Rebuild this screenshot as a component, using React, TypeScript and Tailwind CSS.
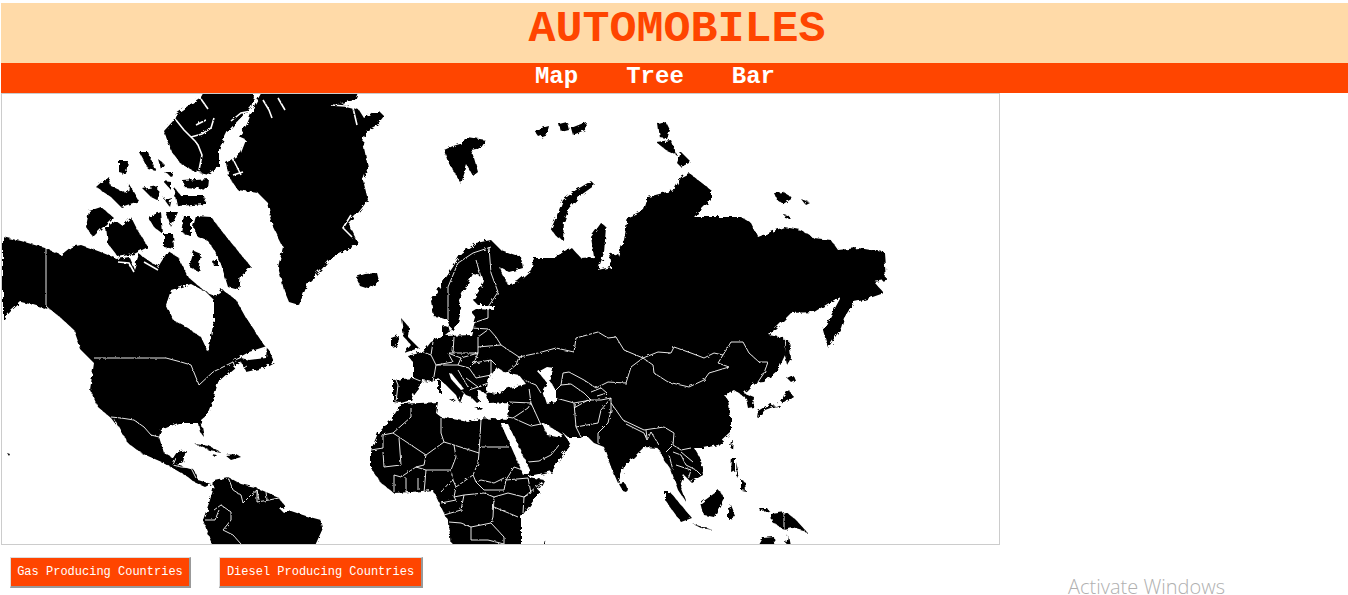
const land = [
  // greenland
  'M254,104 L262,90 L358,90 L354,100 L340,103 L352,108 L358,110 L363,118 L372,112 L379,112 L383,116 L376,125 L365,131 L362,143 L367,167 L362,180 L367,200 L357,213 L347,223 L357,243 L347,250 L330,258 L320,270 L307,283 L298,305 L288,302 L283,290 L277,267 L282,247 L272,227 L267,203 L257,193 L237,190 L228,177 L225,163 L240,153 L245,140 L238,137 L246,124 Z',
  // ellesmere
  'M175,114 L200,97 L204,90 L250,90 L253,97 L250,107 L227,131 L218,149 L218,166 L207,174 L193,171 L180,164 L170,151 L163,131 L172,121 Z',
  // arctic islands
  'M138,152 L147,152 L155,171 L147,169 Z',
  'M157,159 L163,164 L160,169 Z',
  'M118,161 L127,161 L125,174 L118,172 Z',
  'M95,187 L107,176 L110,186 L127,194 L128,184 L138,201 L120,207 L110,197 Z',
  'M142,189 L157,186 L158,201 L150,197 Z',
  'M162,181 L170,182 L170,190 Z',
  'M163,199 L170,197 L168,206 Z',
  'M173,187 L180,196 L203,196 L205,204 L177,206 Z',
  'M182,181 L208,179 L207,189 L183,187 Z',
  'M163,172 L172,172 L170,176 Z',
  'M88,211 L100,207 L112,217 L103,226 L92,237 L85,227 Z',
  'M105,227 L115,221 L122,226 L130,217 L137,231 L147,247 L133,254 L117,257 L107,244 Z',
  'M147,217 L160,212 L162,234 L153,227 Z',
  'M165,212 L177,212 L170,227 Z',
  'M163,234 L172,234 L173,249 L163,247 Z',
  'M183,216 L190,216 L190,237 L180,232 Z',
  'M195,216 L210,217 L223,234 L237,251 L250,267 L240,276 L238,290 L227,287 L220,264 L213,250 L207,241 L197,237 L192,227 Z',
  'M193,251 L200,254 L197,271 L188,267 Z',
  'M212,262 L217,260 L217,266 L213,266 Z',
  // north america
  'M2,237 L20,241 L44,248 L60,255 L70,247 L80,245 L97,251 L117,259 L128,257 L133,269 L138,254 L157,267 L167,251 L177,257 L187,277 L200,288 L212,296 L222,290 L235,300 L245,318 L253,330 L263,345 L268,350 L273,362 L262,368 L245,372 L240,362 L228,372 L217,382 L213,397 L206,415 L200,420 L203,437 L199,432 L197,423 L177,423 L160,430 L158,437 L163,453 L172,458 L176,452 L185,450 L182,462 L176,465 L193,470 L197,480 L210,484 L204,487 L193,482 L187,477 L163,463 L140,453 L127,443 L116,426 L110,418 L97,407 L89,390 L93,363 L80,350 L73,330 L60,318 L50,310 L33,305 L20,302 L10,311 L2,320 Z',
  // caribbean and islets
  'M194,444 L208,446 L220,452 L208,450 Z',
  'M224,455 L235,454 L240,457 L230,460 Z',
  'M211,455 L217,456 L215,458 Z',
  'M6,453 L9,454 L8,456 Z',
  // south america
  'M213,480 L227,477 L240,484 L253,487 L265,492 L277,497 L287,510 L305,516 L320,520 L322,528 L312,550 L213,550 L202,520 L208,503 L212,490 Z',
  // iceland, uk, ireland
  'M355,277 L364,274 L376,273 L378,281 L368,289 L359,286 Z',
  'M400,318 L408,327 L407,337 L418,348 L403,353 L410,345 L403,337 Z',
  'M390,338 L398,335 L397,345 L390,347 Z',
  // svalbard
  'M443,150 L452,146 L459,144 L466,137 L485,140 L480,148 L470,150 L473,158 L477,172 L472,176 L466,165 L460,184 L452,170 L447,162 Z',
  // franz josef, severnaya zemlya, new siberian, novaya zemlya
  'M533,130 L548,126 L546,134 L538,137 Z',
  'M558,124 L566,122 L568,130 L560,132 Z',
  'M570,128 L585,122 L584,130 L572,135 Z',
  'M657,124 L665,122 L669,130 L666,139 L659,138 Z',
  'M655,142 L670,140 L676,155 L665,150 Z',
  'M680,152 L690,162 L680,167 L676,163 Z',
  'M773,193 L782,192 L792,198 L782,204 L776,200 Z',
  'M800,199 L808,202 L804,204 Z',
  'M783,214 L788,216 L789,219 L784,218 Z',
  'M550,229 L556,215 L562,200 L575,190 L590,181 L594,185 L580,195 L568,208 L563,222 L562,240 L555,236 Z',
  // eurasia
  'M392,380 L412,378 L412,362 L407,356 L422,352 L430,342 L441,337 L441,327 L447,325 L449,332 L451,332 L447,322 L441,318 L433,317 L430,301 L440,285 L452,267 L460,253 L475,243 L490,240 L500,250 L520,257 L522,268 L508,272 L498,267 L507,285 L517,281 L530,270 L533,258 L553,258 L570,247 L580,258 L593,257 L590,237 L600,223 L605,227 L603,253 L597,270 L610,267 L608,253 L617,256 L623,240 L627,217 L643,210 L647,197 L673,190 L680,177 L688,173 L710,190 L710,200 L693,217 L710,217 L740,217 L750,223 L757,237 L783,227 L800,230 L813,238 L830,240 L837,250 L857,248 L883,252 L885,280 L873,282 L883,293 L863,300 L853,302 L843,318 L840,328 L827,348 L822,330 L840,297 L833,300 L813,312 L790,313 L773,330 L768,335 L783,338 L785,353 L777,370 L763,382 L753,383 L743,393 L753,397 L752,407 L747,408 L745,398 L733,390 L723,395 L727,400 L730,417 L730,433 L717,445 L703,448 L693,448 L700,460 L702,475 L690,482 L683,475 L679,486 L685,502 L677,490 L670,470 L663,460 L657,448 L643,447 L633,457 L623,467 L617,483 L610,467 L603,447 L593,443 L587,437 L567,437 L562,433 L570,445 L560,457 L550,473 L527,476 L505,430 L506,417 L508,402 L488,403 L485,393 L476,390 L478,400 L475,402 L470,397 L465,395 L462,392 L458,402 L455,395 L445,385 L437,378 L432,382 L422,380 L420,384 L413,393 L410,400 L400,403 L392,402 Z',
  // africa
  'M370,450 L377,433 L390,420 L400,404 L437,402 L435,413 L440,417 L457,420 L467,422 L478,418 L507,420 L528,477 L543,480 L533,500 L520,517 L520,550 L450,550 L448,523 L440,507 L432,490 L410,492 L393,493 L380,483 L370,468 Z',
  // med islands, japan, taiwan, indonesia
  'M437,381 L440,381 L440,393 L437,393 Z',
  'M448,399 L455,400 L452,402 Z',
  'M474,408 L482,408 L480,410 Z',
  'M618,484 L624,483 L627,490 L625,492 L622,491 Z',
  'M785,340 L788,340 L790,358 L786,365 L784,355 Z',
  'M786,378 L792,375 L794,380 L790,382 Z',
  'M792,396 L780,404 L764,410 L756,418 L757,411 L768,404 L778,407 L783,395 L788,390 Z',
  'M730,441 L732,440 L731,449 L729,447 Z',
  'M731,457 L734,457 L734,470 L730,472 Z',
  'M740,480 L744,482 L745,491 L740,490 Z',
  'M735,462 L738,474 L736,478 Z',
  'M664,492 L669,492 L691,518 L680,522 L664,500 Z',
  'M700,503 L718,490 L723,498 L713,517 L703,515 Z',
  'M727,510 L730,505 L735,517 L727,519 Z',
  'M758,508 L766,508 L768,511 L760,512 Z',
  'M770,514 L785,512 L795,520 L806,532 L792,528 L783,530 L771,522 Z',
  'M692,524 L712,530 L700,528 Z',
  'M755,550 L762,538 L773,537 L775,550 Z',
  'M784,550 L787,535 L790,550 Z',
  'M541,550 L544,540 L545,550 Z',
]

const water = [
  // hudson bay, james bay
  'M170,290 L190,284 L205,292 L213,300 L213,320 L207,352 L200,337 L187,328 L172,320 L165,305 Z',
  // gulf of st lawrence
  'M230,362 L248,352 L266,346 L265,358 L248,360 L240,358 Z',
  // baltic
  'M481,276 L472,274 L463,290 L458,300 L460,312 L457,322 L450,332 L445,336 L470,335 L473,325 L475,318 L470,312 L475,309 L493,310 L493,305 L477,305 L472,300 L480,288 L483,281 Z',
  'M436,320 L447,320 L447,327 L441,325 Z',
  // black sea, caspian
  'M485,392 L488,378 L496,367 L503,372 L518,375 L525,384 L508,388 L495,394 Z',
  'M537,372 L546,367 L553,368 L548,380 L555,390 L555,402 L546,404 L542,392 L547,384 Z',
  // adriatic
  'M448,373 L451,374 L463,389 L460,390 L450,379 Z',
  // red sea, persian gulf, aden
  'M500,424 L507,424 L530,472 L523,476 Z',
  'M541,423 L550,427 L562,435 L556,437 L546,435 Z',
  'M528,476 L552,471 L557,473 L534,478 Z',
  // baja gulf
  'M113,418 L126,442 L118,432 Z',
  // amazon mouth
  'M279,509 L285,506 L288,510 L282,512 Z',
]

// fjords drawn as white strokes
const fjords = [
  'M175,120 L183,130 L190,137 L194,141 L197,145 L201,155 L198,170',
  'M190,137 L201,134 L210,128 L213,118',
  'M195,125 L205,120',
  'M200,99 L207,109',
  'M230,121 L240,113 L250,111',
  'M262,100 L268,110 L271,118',
  'M277,98 L284,110',
  'M330,105 L344,106 L352,108 L356,125',
  'M350,215 L342,228 L352,238',
  'M230,155 L240,175',
  'M232,175 L242,172',
  'M117,262 L128,263 L133,272',
  'M143,262 L157,270',
]

const borders = [
  // alaska, canada-us
  'M45,248 L45,306 L58,318 L73,332',
  'M93,358 L165,358 L180,362 L190,365 L198,385 L212,372 L232,362 L236,372 L246,366',
  // mexico
  'M110,417 L120,418 L133,420 L143,427 L150,435 L158,437',
  'M175,458 L172,465 L180,467',
  'M180,467 L190,468 L195,478',
  // south america
  'M227,477 L232,490 L240,495 L242,503 L250,495 L256,490 L256,502 L268,500 L278,498',
  'M265,492 L266,500',
  'M256,490 L258,500',
  'M213,510 L220,505 L230,512 L230,520 L222,530 L232,535 L240,544',
  'M204,520 L214,520 L218,510',
  // africa
  'M370,450 L382,448 L382,435 L392,433',
  'M392,433 L425,455 L443,442 L440,433 L440,418',
  'M410,408 L410,417 L392,433',
  'M443,442 L453,445 L478,453 L480,420',
  'M480,447 L508,447',
  'M453,445 L455,457 L450,470 L425,470 L415,467 L400,477 L393,475',
  'M398,438 L400,465 L383,467 L382,452',
  'M425,455 L423,465 L415,467',
  'M478,453 L477,463 L472,475 L475,482 L483,490 L503,490 L505,480 L513,467 L527,472',
  'M475,482 L480,480 L493,483 L503,478',
  'M472,475 L455,487 L452,480 L450,470',
  'M455,487 L453,497 L463,495 L483,493 L493,497 L507,493 L523,497 L540,483',
  'M505,480 L527,478 L530,493 L523,497',
  'M523,497 L522,513',
  'M493,507 L517,517',
  'M493,497 L492,517 L490,523 L503,537 L503,544',
  'M425,470 L423,493',
  'M393,475 L393,492',
  'M405,478 L405,492',
  'M417,478 L417,490',
  'M440,492 L448,483 L452,480',
  'M440,503 L455,500 L453,497',
  'M443,515 L460,510 L463,495',
  'M448,522 L460,523 L470,527 L490,523',
  'M470,527 L470,540 L487,540 L503,544',
  // europe
  'M447,320 L447,287 L457,263 L472,253 L490,247',
  'M475,260 L480,277',
  'M488,247 L490,273 L497,292 L487,307',
  'M472,323 L487,318 L487,308',
  'M470,328 L488,329',
  'M477,337 L488,329 L495,337 L500,345 L477,347',
  'M453,337 L452,353 L477,353 L477,337',
  'M432,342 L430,355 L435,365 L452,362 L447,353 L452,353',
  'M447,353 L460,358 L477,353',
  'M477,353 L473,363 L490,360 L495,365',
  'M500,345 L518,357 L515,365 L505,373',
  'M435,365 L457,365 L460,358',
  'M457,365 L468,368 L473,363',
  'M468,368 L475,378 L490,375 L490,360',
  'M457,370 L467,387',
  'M465,378 L477,387 L487,383',
  'M468,390 L483,385',
  'M395,380 L397,385 L395,402',
  'M412,378 L422,382',
  'M422,352 L430,355',
  'M435,365 L432,382',
  // turkey, caucasus, middle east
  'M523,380 L535,385 L540,393',
  'M485,393 L495,388',
  'M508,402 L530,403 L528,388',
  'M512,418 L527,408 L530,403 L540,425',
  'M506,417 L512,418 L530,426 L540,424',
  'M527,462 L538,461 L550,455 L558,445',
  // central asia
  'M518,357 L537,353 L555,348 L573,352 L575,338 L597,332 L607,338 L615,337 L623,350 L642,358',
  'M642,358 L657,352 L670,353 L673,347 L690,353 L703,358 L713,353 L722,355 L730,342 L742,342 L748,353 L758,362 L767,362 L763,373 L757,382',
  'M642,358 L652,365 L653,373 L667,382 L688,387 L703,380 L708,373 L728,367 L717,363 L722,355',
  'M642,358 L630,367 L625,383 L607,382 L595,388 L583,380 L568,372 L562,373 L560,385 L555,390',
  'M560,385 L570,384 L583,393 L590,400 L573,403',
  'M555,398 L573,403 L575,427 L580,437',
  'M573,408 L587,400 L600,400 L610,398 L600,410 L597,423 L575,427',
  'M610,398 L610,410 L607,423 L597,433 L597,443',
  'M590,392 L600,388 L606,393 L596,396',
  'M610,403 L622,420 L643,430 L663,427 L673,433 L672,445 L665,452',
  'M625,424 L643,433 L646,440 L650,432 L658,445',
  'M645,430 L646,438',
  'M672,445 L680,450 L690,448',
  'M668,455 L672,470',
  'M672,452 L680,455 L685,465 L695,470 L700,475',
  'M680,452 L692,462',
  'M675,465 L690,470 L687,480',
  'M743,393 L752,392',
  'M783,513 L783,530',
]

function WorldMap() {
  return (
    <svg viewBox="1 94 997 450" className="block h-[450px] w-[997px]">
      <defs>
        <filter id="coast" filterUnits="userSpaceOnUse" x="0" y="85" width="1000" height="470">
          <feTurbulence type="fractalNoise" baseFrequency="0.22" numOctaves="3" seed="7" />
          <feDisplacementMap in="SourceGraphic" scale="5" />
        </filter>
        <filter id="line" filterUnits="userSpaceOnUse" x="0" y="85" width="1000" height="470">
          <feTurbulence type="fractalNoise" baseFrequency="0.3" numOctaves="2" seed="3" />
          <feDisplacementMap in="SourceGraphic" scale="2.5" />
        </filter>
      </defs>
      <g fill="#000" filter="url(#coast)">
        {land.map((d, i) => (
          <path key={i} d={d} />
        ))}
      </g>
      <g fill="#fff" filter="url(#coast)">
        {water.map((d, i) => (
          <path key={i} d={d} />
        ))}
      </g>
      <g fill="none" stroke="#fff" strokeWidth="1.6" filter="url(#line)">
        {fjords.map((d, i) => (
          <path key={i} d={d} />
        ))}
      </g>
      <g fill="none" stroke="#fff" strokeWidth="0.9" filter="url(#line)">
        {borders.map((d, i) => (
          <path key={i} d={d} />
        ))}
      </g>
    </svg>
  )
}

export default function App() {
  return (
    <div className="relative h-[595px] overflow-hidden bg-white pt-[3px] font-['Liberation_Mono',monospace]">
      <div className="ml-px h-[60px] bg-[#ffdaa8] pt-[2px] pl-[5px] text-center text-[45px] leading-[50px] font-bold text-[#ff4500]">
        AUTOMOBILES
      </div>
      <nav className="ml-px flex h-[30px] justify-center gap-[48px] bg-[#ff4500] pr-[39px] text-[24px] leading-[27px] font-bold text-white">
        <a>Map</a>
        <a>Tree</a>
        <a>Bar</a>
      </nav>
      <div className="ml-px w-[999px] border border-[#ccc]">
        <WorldMap />
      </div>
      <div className="mt-[12px] ml-[10px] flex gap-[28px]">
        <button className="h-[31px] w-[181px] border-t border-r-2 border-b-2 border-l border-t-[#ddd] border-r-[#999] border-b-[#999] border-l-[#ddd] bg-[#ff4500] text-[12px] text-white">
          Gas Producing Countries
        </button>
        <button className="h-[31px] w-[204px] border-t border-r-2 border-b-2 border-l border-t-[#ddd] border-r-[#999] border-b-[#999] border-l-[#ddd] bg-[#ff4500] text-[12px] text-white">
          Diesel Producing Countries
        </button>
      </div>
      <span className="absolute top-[573px] left-[1068px] font-['Open_Sans',sans-serif] text-[20px] leading-[28px] font-light text-[#b0b0b0]">
        Activate Windows
      </span>
    </div>
  )
}
